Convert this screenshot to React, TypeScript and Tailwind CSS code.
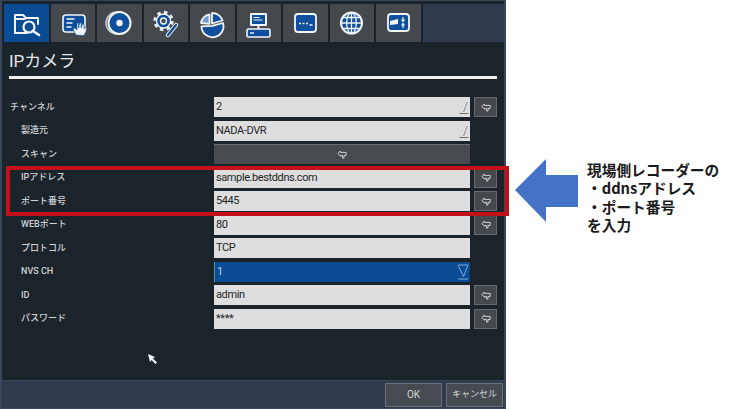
import React from 'react';

const BLUE = '#0f4f9c';

const TabIcon = ({ index }: { index: number }) => {
  const common = { stroke: '#f2f5f8', strokeWidth: 2, fill: 'none', strokeLinecap: 'round', strokeLinejoin: 'round' } as const;
  return (
    <svg width="44" height="38" viewBox="0 0 44 38">
      {index === 0 && (
        <g {...common}>
          <path d="M11 29V11h8l3 3h12v6" />
          <path d="M11 29h12M11 15h10" />
          <circle cx="25" cy="23" r="5.5" fill="#0a4c94" strokeWidth="2.2" />
          <path d="M29 27l6 4" strokeWidth="2.6" />
        </g>
      )}
      {index === 1 && (
        <g>
          <rect x="12" y="11" width="22" height="17" rx="3" fill={BLUE} stroke="#f2f5f8" strokeWidth="1.6" />
          <path d="M15.5 15h8M15.5 19h6M15.5 23h5" stroke="#f2f5f8" strokeWidth="1.5" />
          <path d="M25 31l-3-6 2-1 2 2v-7h1.6v5l1-5h1.6v5l1.2-4h1.5l.2 5 1-2 1.5.6-.6 4-2 4z" fill="#f2f5f8" stroke={BLUE} strokeWidth="0.6" />
        </g>
      )}
      {index === 2 && (
        <g>
          <circle cx="20" cy="19" r="11" fill="none" stroke="#c9d4df" strokeWidth="1.4" />
          <circle cx="22.5" cy="19" r="11" fill={BLUE} stroke="#f2f5f8" strokeWidth="2" />
          <circle cx="22.5" cy="19" r="3.2" fill="#f2f5f8" />
        </g>
      )}
      {index === 3 && (
        <g>
          <circle cx="19.5" cy="17" r="8.5" fill="none" stroke="#e8eef4" strokeWidth="3.4" strokeDasharray="3.4 3.3" />
          <circle cx="19.5" cy="17" r="7" fill={BLUE} stroke="#f2f5f8" strokeWidth="1.3" />
          <circle cx="19.5" cy="17" r="3" fill="#4c5054" stroke="#f2f5f8" strokeWidth="1.3" />
          <path d="M24 31l8-10" stroke="#f2f5f8" strokeWidth="4.4" strokeLinecap="round" />
          <path d="M24 31l8-10" stroke={BLUE} strokeWidth="2.4" strokeLinecap="round" />
        </g>
      )}
      {index === 4 && (
        <g stroke="#f2f5f8" strokeWidth="1.8" strokeLinejoin="round" fill={BLUE}>
          <path d="M22 9a11 11 0 0 1 10.5 7.5L22 19.5z" />
          <path d="M19.5 10.5A10 10 0 0 0 11 19l8.5.8z" fill="#6f9fd2" />
          <path d="M33 19a11 11 0 1 1-21.5 3.4l10.8-.6z" />
        </g>
      )}
      {index === 5 && (
        <g>
          <rect x="13" y="9" width="17" height="13" rx="1" fill="#f2f5f8" />
          <rect x="15" y="11" width="13" height="9" fill={BLUE} />
          <path d="M16.5 13.5h6M16.5 16h9" stroke="#f2f5f8" strokeWidth="1.2" />
          <path d="M21.5 22v3" stroke="#f2f5f8" strokeWidth="2" />
          <rect x="10" y="25" width="23" height="8" rx="1.5" fill={BLUE} stroke="#f2f5f8" strokeWidth="1.6" />
          <path d="M13 29h4" stroke="#f2f5f8" strokeWidth="1.4" />
        </g>
      )}
      {index === 6 && (
        <g>
          <rect x="12" y="10" width="21" height="18" rx="3" fill={BLUE} stroke="#f2f5f8" strokeWidth="1.8" />
          <path d="M16 19.5h2M19.5 19.5h2M23 19.5h2M26.5 21h3" stroke="#f2f5f8" strokeWidth="1.7" />
        </g>
      )}
      {index === 7 && (
        <g stroke="#f2f5f8" fill="none">
          <circle cx="21.5" cy="19" r="10.5" fill={BLUE} strokeWidth="2" />
          <ellipse cx="21.5" cy="19" rx="4.8" ry="10.5" strokeWidth="1.3" />
          <path d="M21.5 8.5v21M11 19h21M12.5 13.5h18M12.5 24.5h18" strokeWidth="1.3" />
        </g>
      )}
      {index === 8 && (
        <g>
          <rect x="12" y="10" width="21" height="17" rx="3" fill={BLUE} stroke="#f2f5f8" strokeWidth="1.8" />
          <path d="M14 17l8-2v5l-8 1z" fill="#f2f5f8" />
          <path d="M27 13v4M25.5 15.5l1.5 2 1.5-2M27 24v-4M25.5 21.5l1.5-2 1.5 2" stroke="#f2f5f8" strokeWidth="1.2" fill="none" />
        </g>
      )}
    </svg>
  );
};

const EnterIcon = () => (
  <svg width="10" height="9" viewBox="0 0 10 9" fill="none" stroke="#d0d2d4" strokeWidth="1">
    <path d="M.8 3.6L3.4 1v1.4h5.8v3H7V8H5.6V5.4H3.6v.8z" />
  </svg>
);

const PencilMark = () => (
  <svg className="absolute right-0 top-0" width="12" height="20" viewBox="0 0 12 20" fill="none">
    <path d="M9.2 5L5.6 15" stroke="#8a8a8a" strokeWidth="1" />
    <path d="M1.5 16.5h9" stroke="#707070" strokeWidth="1" />
  </svg>
);

const DropMark = () => (
  <svg className="absolute right-0 top-0" width="14" height="20" viewBox="0 0 14 20" fill="none" stroke="#7fabd8" strokeWidth="1">
    <path d="M2 3h10L7.5 14.5z" />
    <path d="M2 17h10" />
  </svg>
);

interface RowProps {
  label: string;
  value?: string;
  indent?: boolean;
  pencil?: boolean;
  enter?: boolean;
  active?: boolean;
  scan?: boolean;
}

const rows: RowProps[] = [
  { label: 'チャンネル', value: '2', pencil: true, enter: true },
  { label: '製造元', value: 'NADA-DVR', indent: true, pencil: true },
  { label: 'スキャン', indent: true, scan: true },
  { label: 'IPアドレス', value: 'sample.bestddns.com', indent: true, enter: true },
  { label: 'ポート番号', value: '5445', indent: true, enter: true },
  { label: 'WEBポート', value: '80', indent: true, enter: true },
  { label: 'プロトコル', value: 'TCP', indent: true },
  { label: 'NVS CH', value: '1', indent: true, active: true },
  { label: 'ID', value: 'admin', indent: true, enter: true },
  { label: 'パスワード', value: '****', indent: true, enter: true },
];

const Row = ({ label, value, indent, pencil, enter, active, scan }: RowProps) => (
  <div className="flex h-5 items-center">
    <div className={`w-[204px] pt-px text-[9px] font-medium text-[#cfd1d3] ${indent ? 'pl-[11px]' : ''}`}>{label}</div>
    {scan ? (
      <div className="flex h-5 w-[256px] items-center justify-center border-t border-[#6a6e72] bg-[#474b4f]">
        <EnterIcon />
      </div>
    ) : (
      <div
        className={`relative flex h-5 w-[256px] items-center pl-[2px] pt-px text-[11px] tracking-[-0.4px] ${
          active ? 'border-l border-[#4f9a98] bg-[#0a4c94] text-[#b9d6f2]' : 'bg-[#dedede] text-[#262626]'
        }`}
      >
        {value}
        {pencil && <PencilMark />}
        {active && <DropMark />}
      </div>
    )}
    {enter && (
      <div className="ml-1 flex h-5 w-[23px] items-center justify-center border border-[#666a6e] bg-[#45494d]">
        <EnterIcon />
      </div>
    )}
  </div>
);

export default function App() {
  return (
    <div className="relative flex h-[409px] w-[740px] overflow-hidden bg-white font-['Roboto','Noto_Sans_CJK_JP',sans-serif]">
      <div className="flex h-[409px] w-[506px] shrink-0 flex-col border-x-2 border-y border-x-[#39455a] border-y-[#39455a] bg-[#1b232b]">
        <div className="flex h-[41px] shrink-0 items-end gap-[2px] bg-[#1b232b] pl-[2px]">
          {Array.from({ length: 9 }).map((_, i) => (
            <div
              key={i}
              className={`h-[38px] w-[44.5px] overflow-hidden ${i === 0 ? 'bg-[#0a4c94]' : 'bg-[#45494d]'}`}
            >
              <TabIcon index={i} />
            </div>
          ))}
          <div className="h-[38px] flex-1 bg-[#2f3a4e]" />
        </div>

        <div className="flex h-[34px] shrink-0 items-center pl-[7px] pt-[5px] text-[17px] text-[#e6e8ea]">IPカメラ</div>
        <div className="ml-[7px] h-[3px] w-[488px] shrink-0 bg-[#f0f0f0]" />

        <div className="mt-[18px] flex flex-1 flex-col gap-[3.5px] pl-[8px]">
          {rows.map((row) => (
            <Row key={row.label} {...row} />
          ))}
        </div>

        <div className="flex h-[28px] shrink-0 items-center justify-end gap-1 border-t border-[#39455a] bg-[#2f3a4e] pr-px">
          <div className="flex h-[24px] w-[57px] items-center justify-center border border-[#6b7176] bg-[#454b50] text-[10px] text-[#d4d6d8]">
            OK
          </div>
          <div className="flex h-[24px] w-[57px] items-center justify-center border border-[#6b7176] bg-[#454b50] text-[9px] text-[#d4d6d8]">
            キャンセル
          </div>
        </div>
      </div>

      <div className="flex flex-1 gap-[9px] pl-[9px] pt-[159px]">
        <svg className="shrink-0" width="63" height="63" viewBox="0 0 63 63">
          <path d="M0 31L31 0v16h32v32H31v15z" fill="#4472c4" />
        </svg>
        <p className="mt-[2px] whitespace-nowrap text-[14.7px] font-bold leading-[18.4px] text-[#1a1a1a] font-['Noto_Sans_CJK_JP',sans-serif]">
          現場側レコーダーの
          <br />
          ・ddnsアドレス
          <br />
          ・ポート番号
          <br />
          を入力
        </p>
      </div>

      {/* red highlight over the IP / port rows */}
      <div className="absolute left-[6px] top-[166px] h-[50px] w-[503px] border-4 border-[#c4101a]" />

      {/* mouse cursor */}
      <svg className="absolute left-[148px] top-[354px]" width="10" height="11" viewBox="0 0 10 11">
        <path d="M0 0l7 3-2 1.5 4 4-1.5 1.5-4-4L2 8z" fill="#f4f4f4" />
      </svg>
    </div>
  );
}
